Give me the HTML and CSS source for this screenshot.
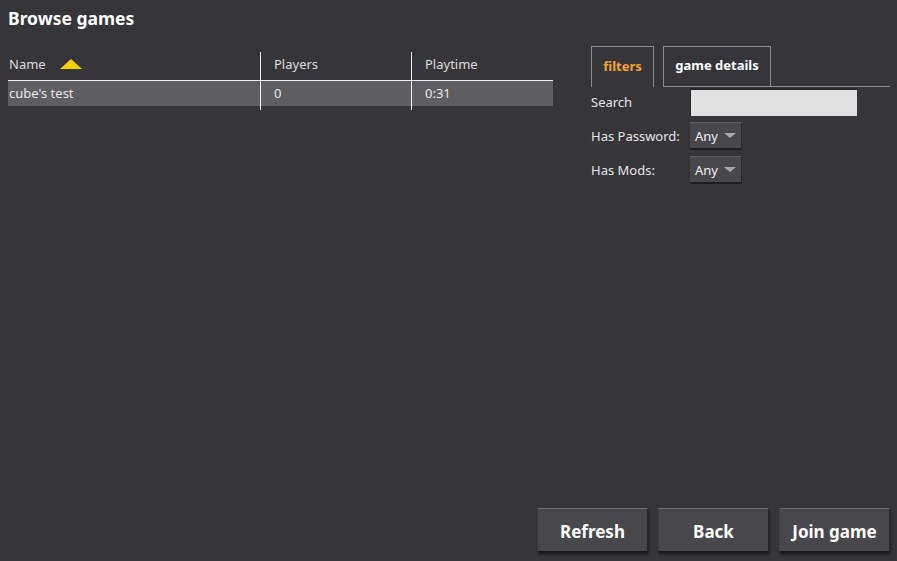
FILE: index.html
```html
<!DOCTYPE html>
<html>
<head>
<meta charset="utf-8">
<link rel="stylesheet" href="styles.css">
</head>
<body>
<div class="page">
  <h1 class="title">Browse games</h1>
  <div class="main">
    <div class="table">
      <div class="col col-name">
        <div class="head">Name <span class="sort"></span></div>
        <div class="cell">cube's test</div>
      </div>
      <div class="col col-players">
        <div class="head">Players</div>
        <div class="cell">0</div>
      </div>
      <div class="col col-time">
        <div class="head">Playtime</div>
        <div class="cell">0:31</div>
      </div>
    </div>
    <div class="side">
      <div class="tabs">
        <div class="tab active">filters</div>
        <div class="tab">game details</div>
        <div class="tab-rest"></div>
      </div>
      <div class="filters">
        <div class="frow">
          <span class="label">Search</span>
          <div class="input"></div>
        </div>
        <div class="frow">
          <span class="label">Has Password:</span>
          <div class="drop">Any <span class="caret"></span></div>
        </div>
        <div class="frow">
          <span class="label">Has Mods:</span>
          <div class="drop">Any <span class="caret"></span></div>
        </div>
      </div>
    </div>
  </div>
  <div class="footer">
    <button class="btn">Refresh</button>
    <button class="btn">Back</button>
    <button class="btn">Join game</button>
  </div>
</div>
</body>
</html>
```
FILE: styles.css
```css
* { box-sizing: border-box; }
html, body { margin: 0; padding: 0; }
body {
  background: #36353a;
  color: #e6e6e6;
  font-family: "Noto Sans", "DejaVu Sans", sans-serif;
  font-size: 13px;
}
.page {
  width: 897px;
  height: 561px;
  display: flex;
  flex-direction: column;
}
.title {
  margin: 0;
  padding: 6px 0 0 8px;
  height: 52px;
  font-size: 17.5px;
  font-weight: 700;
  color: #ffffff;
  line-height: 24px;
}
.main {
  flex: 1;
  display: flex;
  align-items: flex-start;
  padding-left: 8px;
}
.table {
  display: flex;
  width: 545px;
}
.col {
  display: flex;
  flex-direction: column;
  padding-bottom: 4px;
}
.col-name { width: 252px; }
.col-players { width: 151px; border-left: 1px solid #f0f0f0; }
.col-time { width: 142px; border-left: 1px solid #f0f0f0; }
.head {
  height: 29px;
  padding-bottom: 4px;
  border-bottom: 1px solid #f0f0f0;
  display: flex;
  align-items: center;
  color: #dcdcdc;
}
.cell {
  height: 25px;
  line-height: 25px;
  background: #5e5d62;
  color: #e8e8e8;
}
.col-name .head, .col-name .cell { padding-left: 1px; }
.col-players .head, .col-players .cell { padding-left: 13px; }
.col-time .head, .col-time .cell { padding-left: 13px; }
.sort {
  display: inline-block;
  width: 0;
  height: 0;
  margin-left: 14px;
  margin-top: -1px;
  border-left: 11px solid transparent;
  border-right: 11px solid transparent;
  border-bottom: 10px solid #f5d000;
}
.side {
  margin-left: 38px;
  width: 299px;
  margin-top: -6px;
}
.tabs {
  display: flex;
  align-items: flex-end;
  height: 41px;
}
.tab {
  height: 41px;
  padding: 0 8px 2px;
  border: 1px solid #8c8b90;
  border-bottom: none;
  font-weight: 700;
  color: #ffffff;
  display: flex;
  align-items: center;
  line-height: 1;
}
.tab.active {
  color: #f4a330;
  width: 63px;
  justify-content: center;
}
.tab:not(.active) {
  margin-left: 9px;
  border-bottom: 1px solid #8c8b90;
  width: 108px;
  justify-content: center;
}
.tab-rest {
  flex: 1;
  border-bottom: 1px solid #8c8b90;
}
.filters {
  padding-top: 1px;
  display: flex;
  flex-direction: column;
  gap: 6px;
}
.frow {
  display: flex;
  align-items: center;
  height: 28px;
}
.label {
  width: 99px;
  color: #e6e6e6;
  padding-bottom: 1px;
}
.input {
  width: 167px;
  height: 28px;
  background: #e1e1e1;
  border-top: 2px solid #29282c;
  border-left: 1px solid #29282c;
}
.drop {
  width: 52px;
  height: 28px;
  background: #48474c;
  border-top: 1px solid #5c5b60;
  border-bottom: 2px solid #1f1e22;
  border-right: 1px solid #28272b;
  display: flex;
  align-items: center;
  padding-left: 5px;
  color: #f0f0f0;
}
.caret {
  display: inline-block;
  width: 0; height: 0;
  margin-left: 6px;
  border-left: 6px solid transparent;
  border-right: 6px solid transparent;
  border-top: 5px solid #a9a8ad;
}
.footer {
  display: flex;
  justify-content: flex-end;
  gap: 10px;
  padding: 0 7px 8px 0;
}
.btn {
  width: 111px;
  height: 45px;
  background: #48474c;
  border: none;
  border-top: 1px solid #6a696e;
  border-bottom: 2px solid #1c1b1f;
  border-right: 1px solid #29282c;
  border-left: 1px solid #3f3e43;
  box-shadow: 1px 2px 2px rgba(0,0,0,0.35);
  color: #ffffff;
  font-family: "Noto Sans", "DejaVu Sans", sans-serif;
  font-size: 17px;
  font-weight: 700;
  padding: 3px 0 0;
}
```
